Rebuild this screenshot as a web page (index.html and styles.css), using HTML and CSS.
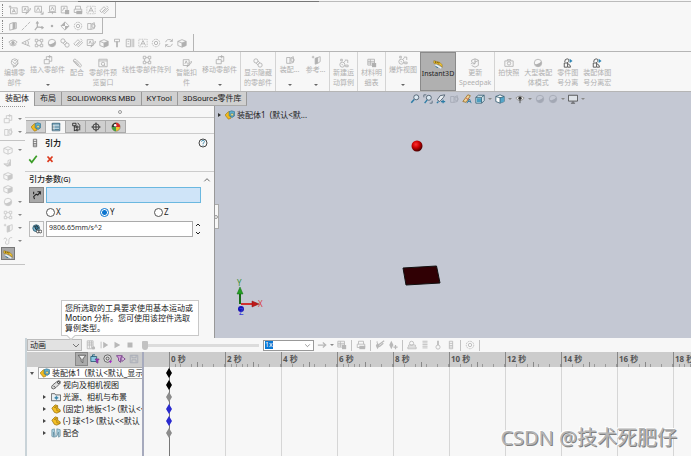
FILE: index.html
```html
<!DOCTYPE html>
<html lang="zh-CN">
<head>
  <meta charset="UTF-8">
  <title>装配体1</title>
  <link rel="stylesheet" href="styles.css">
</head>
<body>
  <!-- icon sprite -->
  <svg class="sprite" aria-hidden="true">
    <symbol id="i-note" viewBox="0 0 12 12"><path d="M3 3.500h8v7H3zM1 2h3M2.500.5v3M5 9l2-4 2 4M5.600 7.700h2.800"/></symbol>
    <symbol id="i-noteedit" viewBox="0 0 12 12"><path d="M1.500 2h7v7h-7zM3.500 7l1.500-3.500L6.500 7M6 11l1-3 4-4 1 1-4 4z"/></symbol>
    <symbol id="i-notezoom" viewBox="0 0 12 12"><path d="M1 1.500h8v7H1zM3 7l2-4 2 4M7 8l4 3M8 11h3V8"/></symbol>
    <symbol id="i-notedown" viewBox="0 0 12 12"><path d="M3 1h7v7H3zM4.500 6.500l2-4 2 4M1 9h10M6.500 8v3"/></symbol>
    <symbol id="i-notelock" viewBox="0 0 12 12"><path d="M1.500 1.500h7v8h-7zM3 7l2-4 1 2"/><path class="fill" d="M6 6h5v5H6z"/></symbol>
    <symbol id="i-print" viewBox="0 0 12 12"><path d="M3 5V1.500h6V5M1.500 5h9v4h-9z"/><path class="fill" d="M4 7h7v4H4z"/></symbol>
    <symbol id="i-frame" viewBox="0 0 12 12"><path d="M1 1.500h10v9H1z" stroke-dasharray="1 1"/><path d="M3 9l3-6 3 6M4.500 7h3"/></symbol>
    <symbol id="i-link" viewBox="0 0 12 12"><path d="M1 7l5-5 2 2-5 5zM5 9l5-5 1.500 1.500-5 5zM9 1l2 2"/></symbol>
    <symbol id="i-plane" viewBox="0 0 12 12"><path d="M2 3.500L6 2v8l-4 1zM6 2h4v7L6 10"/><path class="fill" d="M6 2h3v7L6 10z"/></symbol>
    <symbol id="i-axis" viewBox="0 0 12 12"><path d="M1 11L11 1" stroke-dasharray="4 1"/></symbol>
    <symbol id="i-coord" viewBox="0 0 12 12"><path d="M4 7V1M4 7l7 1M4 7l-3 4M2.500 3L4 1l1.500 2M9 6.500L11 8l-2 1.500" stroke-width="1.400"/></symbol>
    <symbol id="i-point" viewBox="0 0 12 12"><circle class="fill" cx="6" cy="6" r="1.500"/></symbol>
    <symbol id="i-mass" viewBox="0 0 12 12"><path d="M6 1l5 5-5 5-5-5z"/><path class="fill" d="M6 1v5H1zM6 6h5l-5 5z"/></symbol>
    <symbol id="i-box" viewBox="0 0 12 12"><path d="M1 4l5-2 5 2v5l-5 2-5-2zM1 4l5 2 5-2M6 6v5"/></symbol>
    <symbol id="i-cube" viewBox="0 0 12 12"><path d="M1 4l5-2 5 2v5l-5 2-5-2zM1 4l5 2 5-2M6 6v5"/><path class="fill" d="M6 6l5-2v5l-5 2z"/></symbol>
    <symbol id="i-sheet" viewBox="0 0 12 12"><path d="M2 3h4v7H2zM6 4l4-2v7l-4 1"/><circle cx="9" cy="6" r="2"/></symbol>
    <symbol id="i-eye" viewBox="0 0 12 12"><path d="M1 5q5-5 10 0-5 6-10 0z"/><circle class="fill" cx="6" cy="5.500" r="2"/><path d="M2 8q4 3 8 0"/></symbol>
    <symbol id="i-angle" viewBox="0 0 12 12"><path d="M11 1L1 6l10 4M5 4q2 2 0 4M8 3q2 3 0 6"/></symbol>
    <symbol id="i-grid" viewBox="0 0 12 12"><path d="M1.500 1.500h3v3h-3zM7.500 1.500h3v3h-3zM1.500 7.500h3v3h-3zM7.500 7.500h3v3h-3zM5 3h2M3 5v2M9 5v2M5 9h2"/></symbol>
    <symbol id="i-ball" viewBox="0 0 12 12"><circle cx="6" cy="6" r="4.500"/><path class="fill" d="M2 7q4 2 8-3 1 5-3 6.500-4 0-5-3.500z"/></symbol>
    <symbol id="i-chain" viewBox="0 0 12 12"><circle cx="3.500" cy="3.500" r="2.500"/><circle cx="8.500" cy="8.500" r="2.500"/><path d="M3.500 6L6 8.500M6 3.500L8.500 6"/></symbol>
    <symbol id="i-explode" viewBox="0 0 12 12"><circle cx="4" cy="8" r="3"/><path d="M3 7l2 2M6 5l2-2M7 2.500h3.500V6M8 8.500h3v2H8zM2 1.500h2v2H2z"/></symbol>
    <symbol id="i-clip" viewBox="0 0 12 12"><path d="M2 3l6 7q2 2 3 0 1-1-1-3L5 2Q3.500.5 2 2 1 3.500 2.500 5l5 5M4 3.500L9 9"/></symbol>
    <symbol id="i-pin" viewBox="0 0 12 12"><path d="M3 1.500h6v3H3z"/><path class="fill" d="M5 4h2v7H5z"/></symbol>
    <symbol id="i-gear" viewBox="0 0 12 12"><circle cx="6" cy="6" r="4.500" stroke-dasharray="2 1"/><circle cx="6" cy="6" r="2"/></symbol>
    <symbol id="i-cycle" viewBox="0 0 12 12"><path d="M2 5q1-4 6-3l2 2M10 1v3H7M10 7q-1 4-6 3L2 8M2 11V8h3"/></symbol>
    <symbol id="i-update" viewBox="0 0 12 12"><path d="M2 5V2.500L6 1l4 1.500V9l-4 2-4-2M6 1v4l4-2M1 7q2-3 5 0M6 4v3H3"/></symbol>
    <symbol id="i-part" viewBox="0 0 12 12"><path d="M1.500 5.500h6v5h-6zM4 5.500V2h6.500v5.500h-3M8 0v4M6 2h4"/></symbol>
    <symbol id="i-edit" viewBox="0 0 12 12"><circle cx="5.500" cy="5" r="4"/><path d="M3 4l3 3 4-5M4 9v2l3-1 3-4M5 3h2"/></symbol>
    <symbol id="i-window" viewBox="0 0 12 12"><path d="M1 1.500h10v9H1zM1 3.500h10"/><circle cx="6" cy="7" r="2"/><path d="M7.500 8.500L9 10"/></symbol>
    <symbol id="i-film" viewBox="0 0 12 12"><path d="M1.500 1.500h5v9h-5zM8.500 1v10M10.500 1v10M3 4h2M3 7h2"/></symbol>
    <symbol id="i-ref" viewBox="0 0 12 12"><path d="M1 2.500h3M2.500 1v3M5 4l3-1v7l-3 1zM8 3l3-1v6L8 10"/><path class="fill" d="M5 4l3-1v7l-3 1z"/></symbol>
    <symbol id="i-table" viewBox="0 0 12 12"><path d="M1 1.500h8v7H1zM1 4h8M1 6h8M4 1.500v7"/><path class="fill" d="M6 6h5v5H6z"/></symbol>
    <symbol id="i-camera" viewBox="0 0 12 12"><path d="M1 3.500h10v6.500H1zM4 3.500V2h4v1.500"/><circle cx="6" cy="6.500" r="2"/></symbol>
    <symbol id="i-bend" viewBox="0 0 12 12"><path d="M1 4q1-3 3-1t-1 4q-1 3 2 3t2-4q0-5 4-4"/></symbol>
    <symbol id="i-wedge" viewBox="0 0 12 12"><path d="M1 7l4 3 4-1V2L6 3v4z"/><path class="fill" d="M1 7l5 1 3-6v7l-4 1z"/></symbol>
    <symbol id="i-split" viewBox="0 0 12 12"><path d="M2 5q0-4 3-4t2 3l-2 2M1.500 6h4v5h-4zM6 7q3 1 3 4H6"/><path d="M8 1v5l3.500-2.500z" fill="#2f86b5" stroke="none"/></symbol>
    <symbol id="i-ruler" viewBox="0 0 12 12"><path d="M1 2l7 2 3 3v3L8 7 1 5z" fill="#f6c832" stroke="#8a6a10" stroke-width=".6"/><path d="M3 3v1.500M5 3.500V5M7 4v1.500" stroke="#443300"/><path d="M3 7l7 4" stroke="#e8f5ff" stroke-width="1.600"/><path d="M3 9l3 1.500" stroke="#29749b"/></symbol>
    <symbol id="i-asm" viewBox="0 0 12 12"><path d="M0 6l4-4 3 1v7L4 11z" fill="#f0b91e" stroke="#8c6405" stroke-width=".6"/><path d="M5 2l3-1 3.500 1v5L8.500 9 5 7z" fill="#62b2d2" stroke="#24627e" stroke-width=".7"/><path d="M7 4h3v3H7z" fill="#ffe37b" stroke="#24627e" stroke-width=".6"/></symbol>
    <symbol id="i-cpart" viewBox="0 0 12 12"><path d="M1 5l4-4 3 1v3l3 2v2l-4 2-3-1z" fill="#f4bf25" stroke="#8c6405" stroke-width=".8"/><path d="M4 4l3 1v3l4 1M4 4l4-2" stroke="#8c6405" stroke-width=".7" fill="none"/></symbol>
    <symbol id="i-list" viewBox="0 0 12 12"><path d="M1.500 1.500h9v9h-9z" fill="#e9f5fb" stroke="#315b72"/><path d="M1 2.500h10M4 5h6M4 7h6M4 9h6" stroke="#2c6b8a"/><path d="M2 5h1M2 7h1M2 9h1" stroke="#222"/></symbol>
    <symbol id="i-config" viewBox="0 0 12 12"><path d="M2 1.500h4v3H2zM4 4.500V11M4 6h2M4 10h2M6.500 5h2v2h-2zM6.500 8.500h2v2h-2zM8 1l2.500 3v6"/></symbol>
    <symbol id="i-target" viewBox="0 0 12 12"><circle cx="6" cy="6" r="3.800"/><path d="M6 .5v11M.5 6h11"/></symbol>
    <symbol id="i-pie" viewBox="0 0 12 12"><circle cx="6" cy="6" r="5" fill="#f1c232" stroke="#555" stroke-width=".5"/><path d="M6 6V1a5 5 0 0 1 5 5z" fill="#d92a2a" stroke="none"/><path d="M6 6V1a5 5 0 0 0-5 5z" fill="#333" stroke="none"/><path d="M6 6H1a5 5 0 0 0 5 5z" fill="#41a047" stroke="none"/><circle cx="5" cy="4" r="1.500" fill="#fff" stroke="none"/></symbol>
    <symbol id="i-spring" viewBox="0 0 12 12"><path d="M4 1.500h4M4 1.500v9h4v-9M4 4h4M4 6.500h4M4 8.500h4"/></symbol>
    <symbol id="i-help" viewBox="0 0 12 12"><circle cx="6" cy="6" r="4.800"/><path d="M4.300 4.500q0-1.800 1.700-1.800t1.700 1.500T6 6.500v1M6 8.500v1" stroke="#2f7fa4"/></symbol>
    <symbol id="i-check" viewBox="0 0 12 12"><path d="M1.500 6.500l3 3.500 6-8" stroke="#3c9d28" stroke-width="2"/></symbol>
    <symbol id="i-cross" viewBox="0 0 12 12"><path d="M3 3l6 6.500M9 3L3 9.500" stroke="#dc3b1e" stroke-width="2"/></symbol>
    <symbol id="i-up" viewBox="0 0 12 12"><path d="M2 8l4-4 4 4"/></symbol>
    <symbol id="i-down" viewBox="0 0 12 12"><path d="M2 4l4 4 4-4"/></symbol>
    <symbol id="i-dir" viewBox="0 0 12 12"><path d="M3 11l-1-3 3-3 2 1 3-4M6.500 2H10v3.500M2 5V2" stroke-width="1.300"/></symbol>
    <symbol id="i-value" viewBox="0 0 12 12"><circle cx="5" cy="5" r="4" fill="#7fbdd8" stroke="#2b5568"/><path d="M3 3l3-1 2 3-3 2z" fill="#2b7495"/><circle cx="7" cy="9" r="1.700" fill="#fff" stroke="#333"/><circle cx="10" cy="9" r="1.700" fill="#fff" stroke="#333"/></symbol>
    <symbol id="i-zoom" viewBox="0 0 12 12"><circle cx="7.500" cy="4" r="3" fill="#dbe9f2" stroke="#456"/><path d="M5 6.500L1.500 10.500" stroke="#2c7ca5" stroke-width="1.800"/></symbol>
    <symbol id="i-zoomarea" viewBox="0 0 12 12"><path d="M1 1h3M1 1v3M11 8v3H8" stroke="#567"/><circle cx="7" cy="4.500" r="3" fill="#dbe9f2" stroke="#456"/><path d="M5 7l-3 4" stroke="#2c7ca5" stroke-width="1.600"/></symbol>
    <symbol id="i-zoomback" viewBox="0 0 12 12"><path d="M10.500 1L5 2 1.500 7l3 2L9 4z" fill="#e8eef2" stroke="#456"/><path d="M3 9l-2 2M6 9h5M8.500 7v4" stroke="#2c7ca5" stroke-width="1.500"/></symbol>
    <symbol id="i-style" viewBox="0 0 12 12"><path d="M1 9L7 1l3 1-5 8z" fill="#f0d49a" stroke="#9a6f28"/><path d="M5 5l3 2" stroke="#c43"/><path d="M6 11l3-5 2 5M7 9h3" stroke="#2976a0"/></symbol>
    <symbol id="i-ccube" viewBox="0 0 12 12"><path d="M1 4l3-2.500h7V8l-3 3H1z" fill="#e5f3f8" stroke="#345c70"/><path d="M2 5h6v5H2z" fill="#4c9dbf" stroke="none"/><path d="M1 4h7l3-2.500M8 4v7" stroke="#345c70"/></symbol>
    <symbol id="i-cshade" viewBox="0 0 12 12"><path d="M1 3l5-2 5 2v6l-5 2-5-2z" fill="#fff" stroke="#345c70"/><path d="M6 4.500L11 3v6l-5 2z" fill="#55a5c8" stroke="none"/><path d="M1 3l5 1.500L11 3M6 4.500V11" stroke="#345c70"/></symbol>
    <symbol id="i-ceye" viewBox="0 0 12 12"><path d="M1 5q5-5 10 0-5 6-10 0z" fill="#eee" stroke="#888"/><circle cx="6" cy="5" r="2" fill="#333" stroke="none"/><path d="M6 6v5" stroke="#444"/></symbol>
    <symbol id="i-monitor" viewBox="0 0 12 12"><path d="M.5 1.500h11v7H.5z" fill="#dfe3e8" stroke="#444"/><path d="M6 9v2M3.500 11h5" stroke="#444"/></symbol>
    <symbol id="i-calc" viewBox="0 0 12 12"><path d="M1.500 1h7v9.500h-7zM1.500 3.500h7M1.500 6h7M4 1v9M6.500 1v9"/><circle class="fill" cx="9" cy="9.500" r="2"/></symbol>
    <symbol id="i-start" viewBox="0 0 12 12"><path d="M2.500 2v8"/><path class="fill" d="M5 2l6 4-6 4z"/></symbol>
    <symbol id="i-play" viewBox="0 0 12 12"><path class="fill" d="M3 2l7 4-7 4z"/></symbol>
    <symbol id="i-stop" viewBox="0 0 12 12"><path class="fill" d="M3 3h6v6H3z"/></symbol>
    <symbol id="i-arrow" viewBox="0 0 12 12"><path d="M1 6h9M7 3l3.500 3L7 9" stroke-width="1.500"/></symbol>
    <symbol id="i-key" viewBox="0 0 12 12"><path class="fill" d="M4 1l2.500 5L4 11 1.500 6z"/><path d="M9 6v5M6.500 8.500h5" stroke-width="1.500"/></symbol>
    <symbol id="i-wand" viewBox="0 0 12 12"><path class="fill" d="M3 3l2.500 4L3 11 1 7z"/><path d="M4 6l7-5M5 8l5-4M2 2l1 1" stroke-width="1.500"/></symbol>
    <symbol id="i-motor" viewBox="0 0 12 12"><path d="M1 8.500h10v2H1zM2 8V6h8v2"/><circle cx="5.500" cy="4" r="2.500"/></symbol>
    <symbol id="i-damper" viewBox="0 0 12 12"><path d="M3 1.500h6M3 3.500h6M3 5.500h6M3 7.500h6M3 9.500h6"/></symbol>
    <symbol id="i-contact" viewBox="0 0 12 12"><circle cx="6" cy="8.500" r="2.500"/><path class="fill" d="M5 1h2v5H5z"/></symbol>
    <symbol id="i-funnel" viewBox="0 0 12 12"><path d="M1.500 1.500h9L7 6v4.500L5 9V6z" fill="#eee" stroke="#555"/></symbol>
    <symbol id="i-fanim" viewBox="0 0 12 12"><path d="M1 3h7v6H1zM3 3V1h3" fill="#8cc8e2" stroke="#275b74"/><path d="M6 6h5L9.500 8v3l-2-1V8z" fill="#a2c" stroke="#748"/></symbol>
    <symbol id="i-fdrive" viewBox="0 0 12 12"><circle cx="5.500" cy="5.500" r="4.500" fill="#ddd" stroke="#555"/><circle cx="5.500" cy="5.500" r="1.800" stroke="#444"/><path d="M7 8h4l-2 3z" fill="#a2c" stroke="none"/></symbol>
    <symbol id="i-fsel" viewBox="0 0 12 12"><path d="M.5 2h7L5.500 5v5L3 8V5z" fill="#d9a0df" stroke="#713a86"/><path d="M7 3l4 3-4 3z" fill="#f3d9f6" stroke="#713a86"/></symbol>
    <symbol id="i-disk" viewBox="0 0 12 12"><path d="M1.500 1.500h9v9h-9zM3.500 1.500v3h5v-3M3.500 10V7h5v3"/></symbol>
    <symbol id="i-view" viewBox="0 0 12 12"><path d="M1 10q-1-2 1-4l5-4q2-2 4-.5t-1 3.500l-4 4q-3 3-5 1z" fill="#ddd" stroke="#555"/><circle cx="9" cy="3" r="1.200"/><path d="M3 7l2 2"/></symbol>
    <symbol id="i-light" viewBox="0 0 12 12"><path d="M.5 2h4l1 1.500h6v7H.5z" fill="#e8eef2" stroke="#555"/><circle cx="6.500" cy="7" r="1.700" fill="#3c86a8" stroke="none"/><path d="M6.500 4.500v5M4 7h5" stroke="#3c86a8"/></symbol>
    <symbol id="i-mates" viewBox="0 0 12 12"><path d="M1 2l3-1 1 7q1 2 2 0V1l4 1v8L9 11V5L7 10 4 11 3 5v6l-2-1z" fill="#a9cfdf" stroke="#547d90" stroke-width=".7"/></symbol>
  </svg>

  <div class="app">
    <header>
      <div class="topline"></div>
      <div class="toolbar">
        <button aria-label="注释"><svg><use href="#i-note"/></svg></button>
        <button aria-label="编辑注释"><svg><use href="#i-noteedit"/></svg></button>
        <button aria-label="缩放注释"><svg><use href="#i-notezoom"/></svg></button>
        <button aria-label="插入注释"><svg><use href="#i-notedown"/></svg></button>
        <button aria-label="锁定注释"><svg><use href="#i-notelock"/></svg></button>
        <button aria-label="打印"><svg><use href="#i-print"/></svg></button>
        <button aria-label="边框"><svg><use href="#i-frame"/></svg></button>
        <button aria-label="链接"><svg><use href="#i-link"/></svg></button>
      </div>
      <div class="toolbar">
        <button aria-label="基准面"><svg><use href="#i-plane"/></svg></button>
        <button aria-label="基准轴"><svg><use href="#i-axis"/></svg></button>
        <button aria-label="坐标系"><svg><use href="#i-coord"/></svg></button>
        <button aria-label="点"><svg><use href="#i-point"/></svg></button>
        <button aria-label="质心"><svg><use href="#i-mass"/></svg></button>
        <button aria-label="边界框"><svg><use href="#i-gear"/></svg></button>
        <button aria-label="配合参考"><svg><use href="#i-sheet"/></svg></button>
      </div>
      <div class="toolbar last">
        <button aria-label="显示"><svg><use href="#i-eye"/></svg></button>
        <button aria-label="角度"><svg><use href="#i-angle"/></svg></button>
        <button aria-label="阵列"><svg><use href="#i-grid"/></svg></button>
        <button aria-label="球"><svg><use href="#i-ball"/></svg></button>
        <button aria-label="连接"><svg><use href="#i-chain"/></svg></button>
        <button aria-label="链"><svg><use href="#i-link"/></svg></button>
        <button aria-label="编辑"><svg><use href="#i-noteedit"/></svg></button>
        <button aria-label="实体"><svg><use href="#i-cube"/></svg></button>
        <button aria-label="螺钉"><svg><use href="#i-pin"/></svg></button>
        <button aria-label="螺旋"><svg><use href="#i-film"/></svg></button>
        <button aria-label="尺寸"><svg><use href="#i-frame"/></svg></button>
        <button aria-label="齿轮"><svg><use href="#i-gear"/></svg></button>
        <button aria-label="旋转"><svg><use href="#i-cycle"/></svg></button>
        <button aria-label="包覆"><svg><use href="#i-cube"/></svg></button>
      </div>

      <div class="ribbon">
        <button><svg><use href="#i-edit"/></svg>编辑零<br>部件</button>
        <button class="drop"><svg><use href="#i-part"/></svg>插入零部件</button>
        <button><svg><use href="#i-clip"/></svg>配合</button>
        <button><svg><use href="#i-window"/></svg>零部件预<br>览窗口</button>
        <button class="drop"><svg><use href="#i-grid"/></svg>线性零部件阵列</button>
        <button><svg><use href="#i-noteedit"/></svg>智能扣<br>件</button>
        <button class="drop"><svg><use href="#i-part"/></svg>移动零部件</button>
        <i></i>
        <button><svg><use href="#i-chain"/></svg>显示隐藏<br>的零部件</button>
        <i></i>
        <button class="drop short"><svg><use href="#i-sheet"/></svg>装配...</button>
        <button class="drop short"><svg><use href="#i-ref"/></svg>参考...</button>
        <i></i>
        <button><svg><use href="#i-explode"/></svg>新建运<br>动算例</button>
        <i></i>
        <button><svg><use href="#i-table"/></svg>材料明<br>细表</button>
        <i></i>
        <button class="drop"><svg><use href="#i-explode"/></svg>爆炸视图</button>
        <button class="pressed"><svg><use href="#i-ruler"/></svg>Instant3D</button>
        <button><svg><use href="#i-update"/></svg>更新<br>Speedpak</button>
        <i></i>
        <button><svg><use href="#i-camera"/></svg>拍快照</button>
        <button><svg><use href="#i-ball"/></svg>大型装配<br>体模式</button>
        <button><svg class="dark"><use href="#i-split"/></svg>零件图<br>号分离</button>
        <button><svg class="dark"><use href="#i-split"/></svg>装配体图<br>号分离宏</button>
      </div>

      <div class="tabrow">
        <nav class="tabs">
          <button class="active">装配体</button>
          <button>布局</button>
          <button>SOLIDWORKS MBD</button>
          <button>KYTool</button>
          <button>3DSource零件库</button>
        </nav>
        <div class="hud">
          <button aria-label="整屏显示全图"><svg><use href="#i-zoom"/></svg></button>
          <button aria-label="局部放大"><svg><use href="#i-zoomarea"/></svg></button>
          <button aria-label="上一视图"><svg><use href="#i-zoomback"/></svg></button>
          <button aria-label="剖面视图" class="off"><svg><use href="#i-sheet"/></svg></button>
          <button aria-label="动态注解"><svg><use href="#i-style"/></svg></button>
          <button aria-label="视图定向" class="more"><svg><use href="#i-ccube"/></svg></button>
          <button aria-label="显示样式" class="more"><svg><use href="#i-cshade"/></svg></button>
          <button aria-label="隐藏项目" class="more"><svg><use href="#i-ceye"/></svg></button>
          <button aria-label="编辑外观" class="off"><svg><use href="#i-ball"/></svg></button>
          <button aria-label="应用布景" class="off more"><svg><use href="#i-ball"/></svg></button>
          <button aria-label="视图设定" class="more"><svg><use href="#i-monitor"/></svg></button>
        </div>
      </div>
    </header>

    <div class="main">
      <aside class="sidebar">
        <button aria-label="插入" class="more"><svg><use href="#i-part"/></svg></button>
        <button aria-label="新零件" class="more"><svg><use href="#i-sheet"/></svg></button>
        <hr>
        <button aria-label="拉伸" class="more"><svg><use href="#i-box"/></svg></button>
        <button aria-label="筋"><svg><use href="#i-wedge"/></svg></button>
        <button aria-label="抽壳"><svg><use href="#i-cube"/></svg></button>
        <button aria-label="拔模"><svg><use href="#i-cube"/></svg></button>
        <button aria-label="圆角" class="more"><svg><use href="#i-ball"/></svg></button>
        <button aria-label="阵列" class="more"><svg><use href="#i-grid"/></svg></button>
        <button aria-label="参考" class="more"><svg><use href="#i-ref"/></svg></button>
        <button aria-label="曲线" class="more"><svg><use href="#i-bend"/></svg></button>
        <button aria-label="Instant3D" class="pressed"><svg><use href="#i-ruler"/></svg></button>
        <hr>
      </aside>

      <div class="content">
        <div class="workspace">
          <form class="props">
            <div class="grip"></div>
            <div class="ptabs">
              <button type="button" aria-label="设计树"><svg><use href="#i-asm"/></svg></button>
              <button type="button" aria-label="属性" class="active"><svg><use href="#i-list"/></svg></button>
              <button type="button" aria-label="配置"><svg><use href="#i-config"/></svg></button>
              <button type="button" aria-label="尺寸专家"><svg><use href="#i-target"/></svg></button>
              <button type="button" aria-label="外观"><svg><use href="#i-pie"/></svg></button>
            </div>
            <div class="title">
              <svg><use href="#i-spring"/></svg>
              <h1>引力</h1>
              <button type="button" aria-label="帮助"><svg><use href="#i-help"/></svg></button>
            </div>
            <div class="confirm">
              <button type="button" aria-label="确定"><svg><use href="#i-check"/></svg></button>
              <button type="button" aria-label="取消"><svg><use href="#i-cross"/></svg></button>
            </div>
            <div class="group-head">
              <h2>引力参数<small>(G)</small></h2>
              <svg><use href="#i-up"/></svg>
            </div>
            <div class="field">
              <button type="button" class="square on" aria-label="反向"><svg><use href="#i-dir"/></svg></button>
              <input type="text" class="pick" aria-label="方向参考">
            </div>
            <div class="radios">
              <label><input type="radio" name="axis">X</label>
              <label><input type="radio" name="axis" checked>Y</label>
              <label><input type="radio" name="axis">Z</label>
            </div>
            <div class="field">
              <button type="button" class="square" aria-label="数值"><svg><use href="#i-value"/></svg></button>
              <input type="text" class="number" aria-label="引力值" value="9806.65mm/s^2">
              <div class="spin">
                <button type="button" aria-label="增加"><svg><use href="#i-up"/></svg></button>
                <button type="button" aria-label="减少"><svg><use href="#i-down"/></svg></button>
              </div>
            </div>
          </form>

          <div class="viewport">
            <button class="handle" aria-label="折叠面板"></button>
            <div class="crumb"><b></b><svg><use href="#i-asm"/></svg>装配体1&nbsp; (默认&lt;默...</div>
            <svg class="scene" viewBox="0 0 476 233">
              <defs>
                <radialGradient id="red" cx=".4" cy=".35" r=".65">
                  <stop offset="0" stop-color="#ff3030"/>
                  <stop offset=".5" stop-color="#c80000"/>
                  <stop offset="1" stop-color="#4a0000"/>
                </radialGradient>
              </defs>
              <circle cx="202" cy="40" r="5.500" fill="url(#red)"/>
              <path d="M188 162l33.500-2 3.500 17-34 2z" fill="#300004" stroke="#111"/>
              <path d="M25 198v-12" stroke="#176b17" stroke-width="2"/>
              <path d="M22 188l3-7 3 7z" fill="#22a022" stroke="#176b17" stroke-width=".5"/>
              <path d="M26 198h12" stroke="#d03030" stroke-width="2"/>
              <path d="M37 195l7 3-7 3z" fill="#c01818" stroke="#8a1010" stroke-width=".5"/>
              <circle cx="26" cy="203" r="3" fill="#1414b4"/>
              <text x="22" y="180" fill="#389038">Y</text>
              <text x="43" y="201" fill="#d84040">X</text>
              <text x="24" y="209" fill="#3838d8">Z</text>
            </svg>
          </div>
        </div>

        <section class="motion">
          <div class="tip">您所选取的工具要求使用基本运动或<br>Motion 分析。您可使用该控件选取<br>算例类型。</div>
          <div class="mbar">
            <select class="study" aria-label="算例类型"><option>动画</option></select>
            <button aria-label="计算"><svg><use href="#i-calc"/></svg></button>
            <button aria-label="从头播放"><svg><use href="#i-start"/></svg></button>
            <button aria-label="播放"><svg><use href="#i-play"/></svg></button>
            <button aria-label="停止"><svg><use href="#i-stop"/></svg></button>
            <input type="range" aria-label="时间" min="0" max="100" value="0">
            <div class="speed"><input type="text" aria-label="播放速度" value="1x" size="1"><svg><use href="#i-down"/></svg></div>
            <button aria-label="播放模式" class="more"><svg><use href="#i-arrow"/></svg></button>
            <button aria-label="保存动画"><svg><use href="#i-table"/></svg></button>
            <i></i>
            <button aria-label="动画向导"><svg><use href="#i-print"/></svg></button>
            <i></i>
            <button aria-label="自动键码"><svg><use href="#i-wand"/></svg></button>
            <button aria-label="添加键码"><svg><use href="#i-key"/></svg></button>
            <i></i>
            <button aria-label="马达"><svg><use href="#i-motor"/></svg></button>
            <button aria-label="弹簧"><svg><use href="#i-damper"/></svg></button>
            <button aria-label="接触"><svg><use href="#i-contact"/></svg></button>
            <button aria-label="引力"><svg><use href="#i-spring"/></svg></button>
            <i></i>
            <button aria-label="属性"><svg><use href="#i-gear"/></svg></button>
            <i></i>
          </div>

          <div class="timeline">
            <div class="tree">
              <div class="filters">
                <button aria-label="无过滤" class="pressed"><svg><use href="#i-funnel"/></svg></button>
                <button aria-label="过滤动画"><svg><use href="#i-fanim"/></svg></button>
                <button aria-label="过滤驱动"><svg><use href="#i-fdrive"/></svg></button>
                <button aria-label="过滤选定"><svg><use href="#i-fsel"/></svg></button>
                <button aria-label="过滤结果" class="off"><svg><use href="#i-disk"/></svg></button>
              </div>
              <ul>
                <li class="root open"><span><svg><use href="#i-asm"/></svg>装配体1&nbsp; (默认&lt;默认_显示状</span></li>
                <li class="leaf"><svg><use href="#i-view"/></svg>视向及相机视图</li>
                <li><svg><use href="#i-light"/></svg>光源、相机与布景</li>
                <li><svg><use href="#i-cpart"/></svg>(固定) 地板&lt;1&gt; (默认&lt;&lt;</li>
                <li><svg><use href="#i-cpart"/></svg>(-) 球&lt;1&gt; (默认&lt;&lt;默认</li>
                <li><svg><use href="#i-mates"/></svg>配合</li>
              </ul>
            </div>
            <div class="track">
              <div class="ruler">
                <span>0 秒</span><span>2 秒</span><span>4 秒</span><span>6 秒</span><span>8 秒</span><span>10 秒</span><span>12 秒</span><span>14 秒</span><span>16 秒</span><span>18 秒</span>
              </div>
              <div class="keys">
                <svg viewBox="0 0 6 10"><path d="M3 0l3 5-3 5-3-5z" fill="#000"/></svg>
                <svg viewBox="0 0 6 10"><path d="M3 0l3 5-3 5-3-5z" fill="#000"/></svg>
                <svg viewBox="0 0 6 10"><path d="M3 0l3 5-3 5-3-5z" fill="#8c8c8c"/></svg>
                <svg viewBox="0 0 6 10"><path d="M3 0l3 5-3 5-3-5z" fill="#2a2ad0"/></svg>
                <svg viewBox="0 0 6 10"><path d="M3 0l3 5-3 5-3-5z" fill="#2a2ad0"/></svg>
                <svg viewBox="0 0 6 10"><path d="M3 0l3 5-3 5-3-5z" fill="#8c8c8c"/></svg>
              </div>
            </div>
          </div>
        </section>
      </div>
    </div>
    <div class="watermark">CSDN @技术死肥仔</div>
  </div>
</body>
</html>
```

FILE: styles.css
```css
*,
*::before,
*::after {
  box-sizing: border-box;
}
body {
  margin: 0;
  font-family: "Noto Sans", "Noto Sans CJK SC", sans-serif;
  font-size: 8px;
  line-height: 12px;
  color: #222;
  background: #f7f7f7;
}
button {
  display: flex;
  align-items: center;
  justify-content: center;
  padding: 0;
  border: none;
  background: none;
  font: inherit;
  color: inherit;
  flex: none;
}
svg {
  display: block;
  flex: none;
  width: 10px;
  height: 10px;
  fill: none;
  stroke: currentColor;
}
.fill {
  fill: currentColor;
  stroke: none;
}
.sprite {
  position: absolute;
  width: 0;
  height: 0;
}
.app {
  position: relative;
  display: flex;
  flex-direction: column;
  height: 100vh;
  overflow: hidden;
}

/* small toolbars */
.topline {
  height: 2px;
  background: linear-gradient(#777, #777) 78px 1px / 241px 1px no-repeat,
    linear-gradient(#bbb, #bbb) 0 1px / 100% 1px no-repeat;
}
.toolbar {
  display: flex;
  align-items: center;
  gap: 3px;
  width: fit-content;
  height: 16px;
  padding: 0 6px 0 7px;
  border-right: 1px solid #b5b5b5;
  border-bottom: 1px solid #b5b5b5;
  color: #b0b0b0;
}
.toolbar::before {
  content: "";
  width: 1px;
  height: 12px;
  border-left: 1px dotted #888;
  margin-left: -5px;
  margin-right: 2px;
}
.toolbar.last {
  height: 17px;
  border-bottom: none;
}
.toolbar button {
  width: 10px;
}

/* ribbon */
.ribbon {
  display: flex;
  height: 41px;
  padding-left: 2px;
  border-top: 1px solid #b5b5b5;
  border-bottom: 1px solid #b5b5b5;
  font-size: 7px;
  line-height: 10px;
  color: #b0b0b0;
}
.ribbon button {
  flex-direction: column;
  justify-content: flex-start;
  padding: 6px 2px 0;
  margin-right: 1px;
  white-space: nowrap;
}
.ribbon i {
  width: 1px;
  margin-right: 1px;
  background: #d4d4d4;
}
.ribbon .drop {
  position: relative;
  padding-top: 3px;
}
.ribbon .drop::after {
  content: "";
  position: absolute;
  bottom: 5px;
  border: 2px solid transparent;
  border-top-color: #666;
  border-bottom: none;
}
.ribbon .short {
  width: 25px;
}
.ribbon .pressed {
  width: 36px;
  background: #b0b0b0;
  border: 1px solid #8a8a8a;
  color: #222;
}
.dark {
  color: #444;
}

/* command tabs + view toolbar */
.tabrow {
  display: flex;
  justify-content: space-between;
  height: 14px;
  background: #c4c8d3;
}
.tabs {
  display: flex;
  font-family: Roboto, "Noto Sans CJK SC", sans-serif;
}
.tabs button {
  height: 14px;
  padding: 0 5px;
  background: #d0d0d0;
  border-right: 1px solid #999;
  border-bottom: 1px solid #aaa;
  white-space: nowrap;
}
.tabs .active {
  background: #f7f7f7;
  border-bottom: none;
}
.hud {
  display: flex;
  align-items: center;
  gap: 3px;
  padding-right: 106px;
}
.off {
  color: #a3a8b4;
}
.more::after {
  content: "";
  width: 4px;
  margin-left: 3px;
  border: 2px solid transparent;
  border-top-color: #888;
  border-bottom: none;
}

/* left toolbar */
.main {
  display: flex;
  flex: 1;
  min-height: 0;
}
.sidebar {
  width: 25px;
  flex: none;
  padding-top: 5px;
  border-top: 1px dotted #999;
  color: #c8c8c8;
}
.sidebar button {
  width: 24px;
  height: 13px;
  padding-left: 3px;
  justify-content: flex-start;
}
.sidebar .pressed {
  width: 14px;
  padding-left: 1px;
  margin-left: 1px;
  background: #a8a8a8;
  border: 1px solid #777;
}
.sidebar .more::after {
  margin-left: 5px;
}
.sidebar hr {
  margin: 2px 0;
  border: none;
  border-top: 1px solid #c4c4c4;
}
.sidebar .pressed + hr {
  margin-top: 4px;
}
.content {
  display: flex;
  flex-direction: column;
  flex: 1;
  min-width: 0;
}
.workspace {
  display: flex;
  flex: 1;
  min-height: 0;
}

/* property panel */
.props {
  width: 190px;
  flex: none;
  border-right: 1px solid #999;
}
.grip {
  display: flex;
  align-items: center;
  justify-content: center;
  height: 12px;
  border-bottom: 1px solid #ccc;
}
.grip::after,
.handle::after {
  content: "";
  width: 4px;
  height: 4px;
  border: 1px solid #999;
  border-radius: 50%;
}
.ptabs {
  display: flex;
  height: 16px;
  padding: 2px 0 0 1px;
  border-bottom: 1px solid #ccc;
}
.ptabs button {
  width: 20px;
  background: #cfcfcf;
  border: 1px solid #aaa;
  border-left: none;
}
.ptabs .active {
  background: #f7f7f7;
  border-bottom: none;
}
.title {
  display: flex;
  align-items: center;
  gap: 5px;
  height: 18px;
  padding: 0 6px 0 5px;
}
h1,
h2 {
  margin: 0;
  flex: 1;
  font-size: 8px;
  font-weight: bold;
}
h2 {
  font-weight: 500;
}
h2 small {
  font-size: 7px;
}
.title > svg {
  color: #666;
}
.confirm {
  display: flex;
  gap: 7px;
  height: 20px;
  padding: 0 3px 5px;
  border-bottom: 1px solid #ccc;
}
.group-head {
  display: flex;
  align-items: center;
  height: 15px;
  padding: 0 2px 0 4px;
}
.group-head svg {
  width: 8px;
  height: 8px;
  margin-right: 1px;
}
.field {
  display: flex;
  gap: 2px;
  height: 16px;
  padding: 0 13px 0 4px;
}
.square {
  width: 15px;
  border: 1px solid #bbb;
}
.square.on {
  background: #a8a8a8;
  border-color: #888;
}
.field input {
  flex: 1;
  min-width: 0;
  padding: 0 2px 2px;
  border: 1px solid #aaa;
  background: #fff;
  font: inherit;
  font-size: 7px;
  color: #333;
}
.field .pick {
  border-color: #6bb8e0;
  background: #cfe4f8;
}
.spin {
  display: flex;
  flex-direction: column;
  justify-content: space-around;
  width: 6px;
}
.spin svg {
  width: 6px;
  height: 6px;
  stroke-width: 2;
}
.radios {
  display: flex;
  height: 18px;
  padding-left: 21px;
}
.radios label {
  display: flex;
  align-items: center;
  gap: 1px;
  width: 54px;
}
.radios input {
  appearance: none;
  width: 9px;
  height: 9px;
  margin: 0;
  border: 1px solid #555;
  border-radius: 50%;
  background: #fff;
}
.radios input:checked {
  border-color: #0b74cf;
  background: radial-gradient(circle, #0b74cf 2px, #fff 3px);
}

/* 3D view */
.viewport {
  position: relative;
  flex: 1;
  min-width: 0;
  overflow: hidden;
  background: #c4c8d3;
}
.handle {
  position: absolute;
  top: 98px;
  left: -1px;
  width: 5px;
  height: 25px;
  background: #f7f7f7;
  border: 1px solid #aaa;
  border-left: none;
}
.crumb {
  position: absolute;
  top: 3px;
  left: 3px;
  display: flex;
  align-items: center;
  gap: 2px;
}
.crumb b {
  width: 3px;
  margin-right: 2px;
  border: 2px solid transparent;
  border-left: 3px solid #333;
  border-right: none;
}
.scene {
  width: 476px;
  height: 233px;
}
.scene text {
  font-size: 8px;
  stroke: none;
}
.scene circle {
  stroke: none;
}

/* motion study */
.motion {
  position: relative;
  flex: none;
  height: 118px;
  border-left: 2px solid #c9d3d8;
}
.tip {
  position: absolute;
  top: -38px;
  left: 34px;
  width: 138px;
  height: 36px;
  padding: 2px 3px;
  border: 1px solid #c8c8c8;
  background: #fff;
  line-height: 10px;
  white-space: nowrap;
}
.tip::after {
  content: "";
  position: absolute;
  left: 6px;
  bottom: -4px;
  width: 6px;
  height: 6px;
  border: 1px solid #c8c8c8;
  border-top: none;
  border-left: none;
  background: #fff;
  transform: rotate(45deg);
}
.mbar {
  display: flex;
  align-items: center;
  gap: 3px;
  height: 14px;
  color: #b8b8b8;
}
.mbar select {
  appearance: none;
  width: 55px;
  height: 12px;
  margin-right: 1px;
  padding: 0 2px;
  border: 1px solid #bbb;
  border-radius: 0;
  background: linear-gradient(45deg, transparent 45%, #777 45% 60%, transparent 60%) 45px 4px / 3px 3px no-repeat,
    linear-gradient(-45deg, transparent 45%, #777 45% 60%, transparent 60%) 48px 4px / 3px 3px no-repeat, #e2e2e2;
  font: inherit;
  line-height: 10px;
  color: #222;
}
.mbar i {
  width: 1px;
  height: 11px;
  margin: 0 1px;
  background: #c2c2c2;
}
.mbar input[type="range"] {
  appearance: none;
  width: 117px;
  height: 10px;
  margin: 0 1px 0 4px;
  background: linear-gradient(#dcdcdc, #dcdcdc) center / 100% 3px no-repeat;
}
.mbar input[type="range"]::-webkit-slider-thumb {
  appearance: none;
  width: 6px;
  height: 9px;
  border-radius: 1px 1px 3px 3px;
  background: #c2c2c2;
}
.speed {
  display: flex;
  align-items: center;
  justify-content: space-between;
  width: 51px;
  height: 11px;
  padding: 0 2px 0 1px;
  border: 1px solid #999;
  background: #fff;
}
.speed input {
  width: 8px;
  height: 8px;
  padding: 0;
  border: none;
  background: #0a78d4;
  font-family: inherit;
  font-size: 7px;
  line-height: 8px;
  color: #fff;
}
.speed svg {
  width: 7px;
  height: 7px;
  color: #555;
}
.timeline {
  display: flex;
  height: 104px;
}
.tree {
  width: 117px;
  flex: none;
  border-right: 2px solid #a6aabd;
  overflow: hidden;
}
.filters {
  display: flex;
  justify-content: flex-end;
  height: 15px;
  padding-right: 2px;
  background: #ccc;
}
.filters button {
  width: 13px;
  height: 14px;
}
.filters .pressed {
  background: #aaa;
  border: 1px solid #888;
}
.tree ul {
  margin: 0;
  padding: 0;
  list-style: none;
}
.tree li {
  display: flex;
  align-items: center;
  gap: 2px;
  height: 12px;
  padding-left: 16px;
  white-space: nowrap;
}
.tree li::before {
  content: "";
  width: 3px;
  flex: none;
  margin-right: 3px;
  border: 2px solid transparent;
  border-left: 3px solid #444;
  border-right: none;
}
.tree .leaf::before {
  border-left-color: transparent;
}
.tree .root {
  padding-left: 3px;
}
.tree .open::before {
  width: 4px;
  margin-right: 2px;
  border: 2px solid transparent;
  border-top: 3px solid #555;
  border-bottom: none;
}
.root span {
  display: flex;
  align-items: center;
  gap: 2px;
  height: 12px;
  padding-left: 1px;
  border: 1px solid #aaa;
  background: #fff;
}
.track {
  flex: 1;
  min-width: 0;
  overflow: hidden;
}
.ruler {
  display: flex;
  height: 15px;
  padding-left: 25px;
  background: #ccc;
  font-weight: bold;
  line-height: 13px;
  color: #555;
}
.ruler span {
  width: 56px;
  flex: none;
  padding-left: 1px;
  border-left: 1px solid #888;
  background: linear-gradient(#888, #888) 50% 100% / 1px 5px no-repeat,
    repeating-linear-gradient(to right, transparent 0 9%, #999 9% 10%) 0 100% / 100% 3px no-repeat;
}
.keys {
  height: 89px;
  padding: 1px 0 0 22px;
  background: linear-gradient(#777, #777) 25px 0 / 1px 100% no-repeat,
    linear-gradient(to right, #d6d6d6 1px, transparent 1px) 25px 0 / 56px 100%;
}
.keys svg {
  width: 6px;
  height: 10px;
  margin-bottom: 2px;
  stroke: none;
}
.watermark {
  position: absolute;
  right: 14px;
  bottom: 4px;
  font-size: 20px;
  line-height: 28px;
  color: #b4b4b4;
  text-shadow: 1px 1px 0 #808080, -1px -1px 0 #fff;
  white-space: nowrap;
}
```
